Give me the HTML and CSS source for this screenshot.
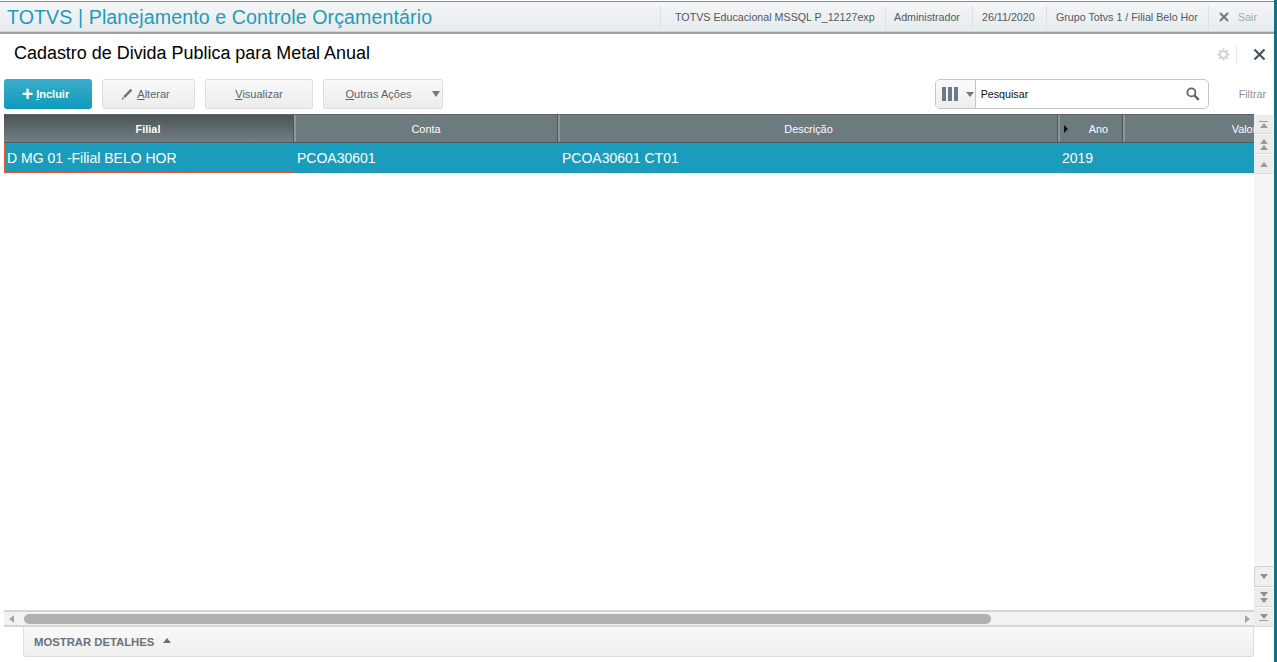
FILE: index.html
```html
<!DOCTYPE html>
<html lang="pt">
<head>
<meta charset="utf-8">
<title>TOTVS | Planejamento e Controle Orçamentário</title>
<link rel="stylesheet" href="styles.css">
</head>
<body>
<div class="app">
  <header class="topbar">
    <h1 class="brand">TOTVS | Planejamento e Controle Orçamentário</h1>
    <nav class="info">
      <span class="info-item env">TOTVS Educacional MSSQL P_12127exp</span>
      <span class="info-item user">Administrador</span>
      <span class="info-item date">26/11/2020</span>
      <span class="info-item branch">Grupo Totvs 1 / Filial Belo Hor</span>
      <span class="info-item exit">
        <svg class="exit-x" width="10" height="10" viewBox="0 0 10 10"><path d="M1 1l8 8M9 1l-8 8" stroke="#6d7780" stroke-width="2" fill="none"/></svg>
        <span>Sair</span>
      </span>
    </nav>
  </header>

  <section class="title-row">
    <h2 class="page-title">Cadastro de Divida Publica para Metal Anual</h2>
    <div class="window-tools">
      <svg class="gear" width="13" height="13" viewBox="0 0 14 14"><g stroke="#cfd2d4" stroke-width="2"><path d="M7 0.5v13M0.5 7h13M2.4 2.4l9.2 9.2M11.6 2.4l-9.2 9.2"/></g><circle cx="7" cy="7" r="4.4" fill="#cfd2d4"/><circle cx="7" cy="7" r="2.6" fill="#fff"/></svg>
      <span class="tool-sep"></span>
      <svg class="close" width="13" height="13" viewBox="0 0 13 13"><path d="M1.5 1.5l10 10M11.5 1.5l-10 10" stroke="#46535f" stroke-width="2.2" fill="none"/></svg>
    </div>
  </section>

  <section class="toolbar">
    <button class="btn primary"><span class="plus">+</span><span><u>I</u>ncluir</span></button>
    <button class="btn alterar">
      <svg width="12" height="13" viewBox="0 0 12 13"><path d="M9.6 0.8l1.8 1.8-7.4 7.4-1.8-1.8z" fill="#6f7479"/><path d="M1.6 9l1.6 1.6-2.6 1.2z" fill="#6f7479"/></svg>
      <span><u>A</u>lterar</span>
    </button>
    <button class="btn visualizar"><span><u>V</u>isualizar</span></button>
    <button class="btn outras"><span><u>O</u>utras Ações</span><i class="caret"></i></button>
    <div class="spacer"></div>
    <div class="search">
      <div class="columns-btn">
        <span class="bars"><b></b><b></b><b></b></span>
        <i class="caret small"></i>
      </div>
      <span class="search-text">Pesquisar</span>
      <svg class="lens" width="14" height="14" viewBox="0 0 14 14"><circle cx="5.4" cy="5.4" r="4" fill="none" stroke="#5a656e" stroke-width="1.8"/><path d="M8.4 8.4l4.4 4.4" stroke="#5a656e" stroke-width="2.4"/></svg>
    </div>
    <span class="filter">Filtrar</span>
  </section>

  <section class="browse">
    <div class="browse-main">
      <div class="grid-area">
        <div class="row head">
          <div class="cell filial-head">Filial</div>
          <div class="cell conta-head">Conta</div>
          <div class="cell desc-head">Descrição</div>
          <div class="cell ano-head"><i class="sort"></i>Ano</div>
          <div class="cell">Valor</div>
        </div>
        <div class="row data">
          <div class="cell filial-data">D MG 01 -Filial BELO HOR</div>
          <div class="cell">PCOA30601</div>
          <div class="cell">PCOA30601 CT01</div>
          <div class="cell">2019</div>
          <div class="cell"></div>
        </div>
      </div>
      <div class="hscroll">
        <i class="arrow left"></i>
        <div class="track"><div class="thumb"></div></div>
        <i class="arrow right"></i>
      </div>
    </div>
    <div class="vscroll">
      <div class="vgroup">
        <div class="vbtn"><i class="bar-top"></i><i class="tri up"></i></div>
        <div class="vbtn"><i class="tri up"></i><i class="tri up"></i></div>
        <div class="vbtn"><i class="tri up"></i></div>
      </div>
      <div class="vgroup">
        <div class="vbtn first-down"><i class="tri down"></i></div>
        <div class="vbtn"><i class="tri down"></i><i class="tri down"></i></div>
        <div class="vbtn"><i class="tri down"></i><i class="bar-bottom"></i></div>
      </div>
    </div>
  </section>

  <footer class="details">
    <span>MOSTRAR DETALHES</span><i class="tri up dark"></i>
  </footer>
</div>
</body>
</html>
```
FILE: styles.css
```css
* { box-sizing: border-box; }
html, body { margin: 0; height: 100%; overflow: hidden; background: #fff; }
body { font-family: "Liberation Sans", Arial, sans-serif; }
button { font-family: inherit; padding: 0; }
h1, h2 { margin: 0; font-weight: 400; }
i { display: block; font-style: normal; }

.app {
  height: 662px;
  display: flex;
  flex-direction: column;
  border-right: 3px solid #0d7286;
}

/* top bar */
.topbar {
  height: 33px;
  flex: none;
  margin-top: 1px;
  margin-bottom: -1px;
  display: flex;
  align-items: center;
  justify-content: space-between;
  padding-left: 7px;
  background: linear-gradient(#f4f6f7, #e6ebee);
  border-top: 1px solid #85898c;
  border-bottom: 2px solid #9ea2a4;
  box-shadow: inset 0 -1px 0 #d4d8da;
}
.brand { font-size: 19.6px; color: #1f9bbd; line-height: 28px; letter-spacing: 0.1px; }
.info { display: flex; height: 23px; font-size: 10.7px; color: #51585f; }
.info-item { display: flex; align-items: center; border-left: 1px solid #dde1e3; white-space: nowrap; }
.env { width: 225px; padding-left: 14px; }
.user { width: 87px; padding-left: 8px; }
.date { width: 74px; padding-left: 9px; }
.branch { width: 162px; padding-left: 9px; }
.exit { width: 66px; padding-left: 10px; gap: 9px; color: #a3a9ad; }
.exit-x { flex: none; }

/* title */
.title-row {
  height: 46px;
  flex: none;
  display: flex;
  align-items: center;
  justify-content: space-between;
  padding: 0 8px 6px 14px;
}
.page-title { font-size: 17.95px; color: #000; }
.window-tools { display: flex; align-items: center; margin-top: 2px; }
.tool-sep { width: 1px; height: 18px; margin: 0 16px 0 6px; border-left: 1px dotted #d6d8da; }
.gear, .close { display: block; }

/* toolbar */
.toolbar {
  height: 30px;
  flex: none;
  display: flex;
  align-items: center;
  padding: 0 8px 0 4px;
}
.btn {
  height: 30px;
  display: flex;
  align-items: center;
  justify-content: center;
  border: 1px solid #dcdcdc;
  border-radius: 3px;
  background: linear-gradient(#fafafa, #ececec);
  color: #5c6469;
  font-size: 11px;
}
.btn u { text-decoration: underline; }
.primary {
  width: 88px;
  gap: 3px;
  margin-right: 10px;
  padding-right: 5px;
  border: 0;
  background: linear-gradient(#3cacc9, #0f9abb);
  color: #fff;
  font-weight: 700;
}
.plus { font-size: 19.5px; line-height: 16px; font-weight: 700; }
.alterar { width: 93px; gap: 4px; margin-right: 10px; padding-right: 6px; }
.visualizar { width: 108px; margin-right: 10px; }
.outras { width: 120px; position: relative; padding-right: 9px; justify-content: center; }
.caret {
  width: 0; height: 0;
  border-left: 4.5px solid transparent;
  border-right: 4.5px solid transparent;
  border-top: 6px solid #6f7a85;
}
.outras .caret { position: absolute; right: 2px; top: 11px; }
.spacer { flex: 1; }
.search {
  width: 274px;
  height: 30px;
  display: flex;
  align-items: center;
  border: 1px solid #c3c6c8;
  border-radius: 5px;
  background: #fff;
  margin-right: 30px;
}
.columns-btn {
  width: 40px;
  height: 100%;
  flex: none;
  display: flex;
  align-items: center;
  gap: 8px;
  padding-left: 6px;
  background: linear-gradient(#fafafa, #eeeeee);
  border-right: 1px solid #c3c6c8;
  border-radius: 4px 0 0 4px;
}
.bars { display: flex; gap: 2px; }
.bars b { display: block; width: 4px; height: 14px; background: #6d7a8d; }
.caret.small { border-left-width: 4px; border-right-width: 4px; border-top-width: 5px; }
.search-text { flex: 1; padding-left: 5px; font-size: 10.7px; color: #111; }
.lens { margin-right: 8px; margin-top: -1px; }
.filter { font-size: 10.7px; color: #8b9297; }

/* browse */
.browse {
  height: 513px;
  flex: none;
  margin-top: 5px;
  display: flex;
  padding-left: 4px;
}
.browse-main { width: 1250px; flex: none; display: flex; flex-direction: column; }
.grid-area { flex: 1; overflow: hidden; }
.row {
  display: grid;
  grid-template-columns: 292px 264px 500px 65px 240px;
  width: 1361px;
}
.head {
  height: 29px;
  background: #6d7a7e;
  border-top: 1px solid #5c666a;
  border-bottom: 1px solid #505a5e;
  color: #fff;
  font-size: 10.9px;
}
.head .cell {
  display: flex;
  align-items: center;
  justify-content: center;
  border-right: 2px solid #8d989c;
  box-shadow: inset -1px 0 0 #4e585c;
  position: relative;
}
.head .filial-head {
  background: linear-gradient(#4b5356, #737f83);
  font-weight: 700;
  padding-right: 2px;
}
.head .conta-head { padding-right: 2px; }
.head .desc-head { padding-right: 1px; }
.ano-head { padding-left: 14px; }
.sort {
  position: absolute;
  left: 4px;
  top: 10px;
  width: 0; height: 0;
  border-top: 4px solid transparent;
  border-bottom: 4px solid transparent;
  border-left: 4px solid #111;
}
.data {
  height: 30px;
  background: #1b9cbd;
  color: #fff;
  font-size: 14px;
  line-height: 30px;
}
.data .cell { padding-left: 2px; white-space: nowrap; overflow: hidden; }
.data .cell:nth-child(2) { padding-left: 1px; }
.data .filial-data {
  margin-right: 2px;
  padding-left: 3px;
  background:
    repeating-linear-gradient(90deg, #ee5a28 0 1px, transparent 1px 2px) top / 100% 1px no-repeat,
    repeating-linear-gradient(90deg, #ee5a28 0 1px, transparent 1px 2px) bottom / 100% 1px no-repeat,
    repeating-linear-gradient(0deg, #ee5a28 0 1px, transparent 1px 2px) left / 1px 100% no-repeat,
    repeating-linear-gradient(0deg, #ee5a28 0 1px, transparent 1px 2px) right / 1px 100% no-repeat;
}

/* horizontal scrollbar */
.hscroll {
  height: 17px;
  flex: none;
  display: flex;
  align-items: center;
  background: #f2f2f2;
  border-top: 2px solid #d5d5d5;
  border-bottom: 2px solid #d5d5d5;
}
.arrow { width: 0; height: 0; border-top: 4.5px solid transparent; border-bottom: 4.5px solid transparent; }
.arrow.left { border-right: 5px solid #a5a5a5; margin-left: 5px; margin-right: 10px; }
.arrow.right { border-left: 5px solid #a5a5a5; margin-left: 3px; margin-right: 4px; }
.track { flex: 1; }
.thumb { width: 967px; height: 10px; border-radius: 5px; background: #b0b0b0; }

/* vertical scrollbar */
.vscroll {
  width: 19px;
  flex: none;
  display: flex;
  flex-direction: column;
  justify-content: space-between;
  background: #f5f5f8;
}
.vbtn {
  height: 20px;
  display: flex;
  flex-direction: column;
  align-items: center;
  justify-content: center;
  gap: 1px;
  background: #ececec;
  border-bottom: 1px solid #dadada;
  border-top: 1px solid #f8f8f8;
}
.first-down { height: 21px; border: 1px solid #cfcfcf; border-right: 0; border-radius: 4px 0 0 0; background: #f0f0f0; }
.tri { width: 0; height: 0; border-left: 4.5px solid transparent; border-right: 4.5px solid transparent; }
.tri.up { border-bottom: 5px solid #9c9c9c; }
.tri.down { border-top: 5px solid #8f8f8f; }
.bar-top, .bar-bottom { width: 9px; height: 1px; background: #9c9c9c; }

/* footer */
.details {
  height: 30px;
  flex: none;
  margin-left: 23px;
  width: 1231px;
  display: flex;
  align-items: center;
  gap: 9px;
  padding-left: 10px;
  background: linear-gradient(#f9f9f9, #efefef);
  border: 1px solid #dedede;
  border-top: 0;
  border-radius: 0 0 3px 3px;
  color: #68727d;
  font-size: 11.3px;
  font-weight: 700;
}
.tri.dark { border-bottom-color: #68727d; margin-top: -2px; }
```
